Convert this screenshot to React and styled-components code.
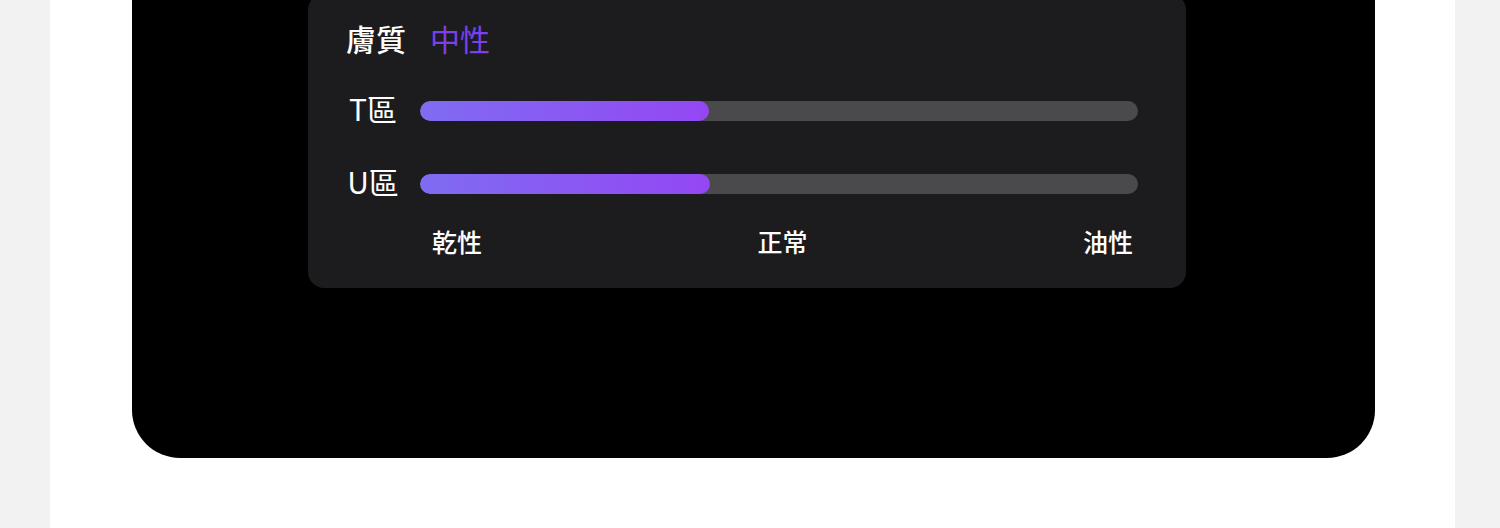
import React from 'react';
import styled, { createGlobalStyle } from 'styled-components';

const zones = [
  { name: 'T區', value: 40.3 },
  { name: 'U區', value: 40.4 },
];

const scale = ['乾性', '正常', '油性'];

const App = () => (
  <Page>
    <GlobalStyle />
    <Column>
      <Phone>
        <Card>
          <TitleRow>
            <Title>膚質</Title>
            <Result>中性</Result>
          </TitleRow>
          <Zones>
            {zones.map((z) => (
              <ZoneRow key={z.name}>
                <ZoneLabel>{z.name}</ZoneLabel>
                <Track>
                  <Fill style={{ width: `${z.value}%` }} />
                </Track>
              </ZoneRow>
            ))}
          </Zones>
          <Scale>
            {scale.map((s) => (
              <ScaleLabel key={s}>{s}</ScaleLabel>
            ))}
          </Scale>
        </Card>
      </Phone>
    </Column>
  </Page>
);

// Style
const GlobalStyle = createGlobalStyle`
  html, body {
    margin: 0;
    padding: 0;
    background: #f2f2f2;
    overflow: hidden;
  }
`;

const Page = styled.div`
  height: 528px;
  overflow: hidden;
  background: #f2f2f2;
  font-family: "Noto Sans CJK TC", "Noto Sans", sans-serif;
`;

const Column = styled.div`
  margin-left: 50px;
  width: 1405px;
  height: 528px;
  background: #ffffff;
  padding-left: 82px;
  box-sizing: border-box;
  display: flow-root;
`;

const Phone = styled.div`
  display: flex;
  align-items: flex-start;
  width: 1243px;
  height: 458px;
  background: #000000;
  border-radius: 0 0 48px 48px;
  padding-left: 176px;
  box-sizing: border-box;
`;

const Card = styled.div`
  width: 878px;
  height: 294px;
  margin-top: -6px;
  box-sizing: border-box;
  padding: 24px 48px 0 38px;
  background: #1c1c1e;
  border-radius: 16px;
  display: flex;
  flex-direction: column;
`;

const TitleRow = styled.div`
  display: flex;
  align-items: center;
  gap: 24px;
  height: 40px;
  font-size: 30px;
`;

const Title = styled.span`
  color: #ffffff;
  font-weight: 500;
`;

const Result = styled.span`
  color: #7b3ff0;
  font-weight: 400;
`;

const Zones = styled.div`
  display: flex;
  flex-direction: column;
  gap: 33px;
  margin-top: 33px;
`;

const ZoneRow = styled.div`
  display: flex;
  align-items: center;
  height: 40px;
  gap: 20px;
`;

const ZoneLabel = styled.span`
  width: 54px;
  margin-top: -6px;
  text-align: center;
  color: #ffffff;
  font-size: 30px;
  font-weight: 400;
  line-height: 40px;
  white-space: nowrap;
`;

const Track = styled.div`
  flex: 1;
  height: 20px;
  border-radius: 10px;
  background: #4a4a4c;
  overflow: hidden;
`;

const Fill = styled.div`
  height: 100%;
  border-radius: 10px;
  background: linear-gradient(90deg, #7f6cf2 0%, #9447f3 100%);
`;

const Scale = styled.div`
  display: flex;
  justify-content: space-between;
  margin: 20px 0 0 74px;
  padding: 0 5px 0 12px;
`;

const ScaleLabel = styled.span`
  color: #ffffff;
  font-size: 25px;
  font-weight: 500;
  line-height: 34px;
`;

export default App;
